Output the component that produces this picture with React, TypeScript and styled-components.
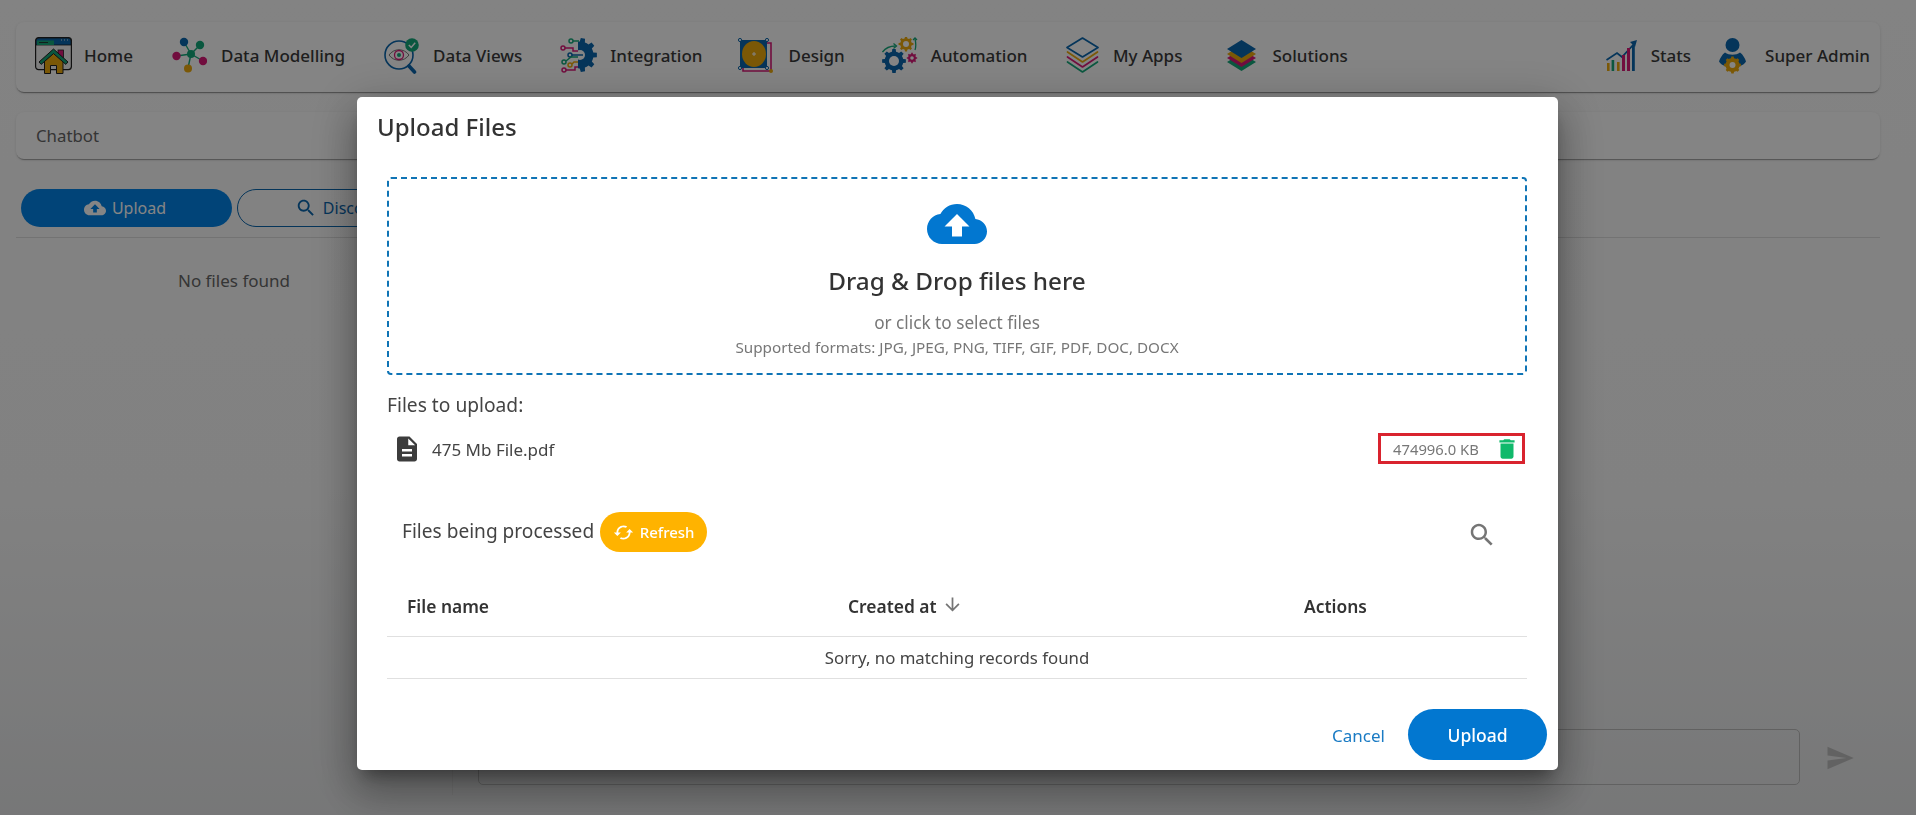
import React from 'react'
import styled, { createGlobalStyle } from 'styled-components'

const GlobalStyle = createGlobalStyle`
  html, body {
    margin: 0;
    height: 100%;
    overflow: hidden;
    font-family: 'Noto Sans', 'Liberation Sans', sans-serif;
    color: #333;
  }
`

const BLUE = '#0a66ad'
const GOLD = '#eba90c'
const PINK = '#d91a78'
const GREEN = '#14a87a'

/* page behind the dialog */

const Page = styled.div`
  box-sizing: border-box;
  height: 815px;
  padding: 22px 36px 0 16px;
  background: linear-gradient(180deg, #fbfbfb 0%, #f8f8f8 60%, #e4e5e6 100%);
`

const NavBar = styled.nav`
  display: flex;
  align-items: center;
  box-sizing: border-box;
  height: 70px;
  padding: 0 10px 4px 19px;
  background: #fdfdfd;
  border-radius: 8px;
  box-shadow: 0 2px 1px -1px rgba(0, 0, 0, 0.35), 0 1px 3px rgba(0, 0, 0, 0.14);
`

const NavItem = styled.a<{ $left: number; $gap: number }>`
  display: flex;
  align-items: center;
  gap: ${props => props.$gap}px;
  margin-left: ${props => props.$left}px;
  font-size: 17px;
  font-weight: 500;
  color: #3a3a3a;
  white-space: nowrap;
`

const NavSpacer = styled.div`
  flex: 1;
`

const Crumbs = styled.div`
  display: flex;
  align-items: center;
  height: 47px;
  margin-top: 20px;
  padding-left: 20px;
  background: #fdfdfd;
  border-radius: 8px;
  box-shadow: 0 2px 1px -1px rgba(0, 0, 0, 0.3), 0 1px 3px rgba(0, 0, 0, 0.12);
  font-size: 16.8px;
  color: #666;
`

const Toolbar = styled.div`
  display: flex;
  align-items: flex-start;
  gap: 5px;
  height: 48px;
  margin-top: 30px;
  padding-left: 5px;
  border-bottom: 1px solid #dcdcdc;
`

const ToolButton = styled.button<{ $filled?: boolean }>`
  display: flex;
  align-items: center;
  justify-content: center;
  gap: 6px;
  box-sizing: border-box;
  width: 211px;
  height: 38px;
  padding-right: 9px;
  border-radius: 19px;
  border: 1px solid ${props => (props.$filled ? 'transparent' : '#0a66ad')};
  background: ${props => (props.$filled ? '#0283e6' : 'transparent')};
  color: ${props => (props.$filled ? '#fff' : '#0a66ad')};
  font: 400 16px 'Noto Sans', sans-serif;
`

const Workspace = styled.div`
  display: flex;
  height: 557px;
`

const FileColumn = styled.div`
  box-sizing: border-box;
  width: 437px;
  padding-top: 31px;
  border-right: 1px solid #dcdcdc;
  text-align: center;
  font-size: 17px;
  color: #666;
`

const ChatColumn = styled.div`
  flex: 1;
  display: flex;
  align-items: flex-end;
  gap: 25px;
  padding: 0 25px 10px 25px;
`

const ChatInput = styled.div`
  flex: 1;
  height: 54px;
  border: 1px solid #bbb;
  border-radius: 5px;
`

const SendSlot = styled.div`
  display: flex;
  height: 54px;
  align-items: center;
  color: #bdbdbd;
`

/* dialog */

const Backdrop = styled.div`
  position: fixed;
  inset: 0;
  display: flex;
  justify-content: center;
  align-items: flex-start;
  padding: 97px 1px 0 0;
  background: rgba(0, 0, 0, 0.48);
`

const Dialog = styled.div`
  box-sizing: border-box;
  width: 1201px;
  height: 673px;
  background: #fff;
  border-radius: 5px;
  box-shadow: 0 11px 15px -7px rgba(0, 0, 0, 0.35), 0 24px 38px 3px rgba(0, 0, 0, 0.22), 0 9px 46px 8px rgba(0, 0, 0, 0.18);
`

const DialogTitle = styled.h2`
  margin: 0;
  padding: 15px 20px 0;
  font-size: 24px;
  line-height: 30px;
  font-weight: 500;
  color: #333;
`

const DialogBody = styled.div`
  padding: 35px 31px 0 30px;
`

const DropZone = styled.div`
  box-sizing: border-box;
  height: 198px;
  padding-top: 15px;
  border: 2px dashed #0f74b5;
  border-radius: 4px;
  display: flex;
  flex-direction: column;
  align-items: center;
`

const DropHeading = styled.div`
  margin-top: 9px;
  font-size: 24.3px;
  line-height: 36px;
  font-weight: 500;
  color: #333;
`

const DropHint = styled.div`
  margin-top: 12px;
  font-size: 17.2px;
  line-height: 24px;
  color: #777;
`

const DropFormats = styled.div`
  margin-top: 2px;
  font-size: 15.25px;
  line-height: 20px;
  color: #777;
`

const SectionLabel = styled.div`
  margin-top: 17px;
  font-size: 19.2px;
  line-height: 26px;
  color: #444;
`

const FileRow = styled.div`
  display: flex;
  align-items: center;
  justify-content: space-between;
  height: 31px;
  margin-top: 15px;
  padding: 0 2px 0 5px;
`

const FileName = styled.div`
  display: flex;
  align-items: center;
  gap: 10px;
  font-size: 17px;
  color: #444;
`

const FileLabel = styled.span`
  margin-top: 2px;
`

const SizeBox = styled.div`
  box-sizing: border-box;
  display: flex;
  align-items: center;
  justify-content: space-between;
  width: 147px;
  height: 31px;
  padding: 0 2px 0 12px;
  border: 3px solid #d9232e;
  font-size: 14.8px;
  color: #777;
`

const ProcessingRow = styled.div`
  display: flex;
  align-items: center;
  height: 40px;
  margin-top: 48px;
  padding: 0 30px 0 15px;
`

const ProcessingTitle = styled.div`
  margin-top: -3px;
  font-size: 19.1px;
  color: #444;
`

const RefreshButton = styled.button`
  display: flex;
  align-items: center;
  justify-content: center;
  gap: 6px;
  box-sizing: border-box;
  width: 107px;
  height: 40px;
  margin-left: 6px;
  border: 0;
  border-radius: 20px;
  background: #ffb300;
  color: #fff;
  font: 500 15px 'Noto Sans', sans-serif;
`

const SearchSlot = styled.div`
  display: flex;
  margin: 6px 0 0 auto;
  color: #757575;
`

const GridRow = styled.div<{ $height: number }>`
  display: grid;
  grid-template-columns: 461px 456px 1fr;
  align-items: center;
  height: ${props => props.$height}px;
  border-bottom: 1px solid #e0e0e0;
`

const HeadCell = styled.div`
  display: flex;
  align-items: center;
  gap: 5px;
  margin-top: -8px;
  font-size: 17.4px;
  font-weight: 600;
  color: #333;

  &:first-child {
    padding-left: 20px;
  }

  svg {
    margin-top: -3px;
  }
`

const EmptyCell = styled.div`
  grid-column: 1 / -1;
  text-align: center;
  font-size: 16.8px;
  color: #444;
`

const TableHead = styled(GridRow)`
  margin-top: 31px;
`

const DialogFooter = styled.div`
  display: flex;
  justify-content: flex-end;
  align-items: center;
  gap: 23px;
  margin: 30px -20px 0 0;
`

const CancelLink = styled.a`
  margin-top: 2px;
  font-size: 17px;
  color: #1a7bc4;
`

const PrimaryButton = styled.button`
  width: 139px;
  height: 51px;
  border: 0;
  border-radius: 26px;
  background: #0277d0;
  color: #fff;
  font: 500 17.5px 'Noto Sans', sans-serif;
`

/* material glyphs */

const Glyph = ({ d, size, color = 'currentColor' }: { d: string; size: number; color?: string }) => (
  <svg width={size} height={size} viewBox="0 0 24 24" fill={color} style={{ flex: 'none' }}>
    <path d={d} />
  </svg>
)

const CLOUD = 'M19.35 10.04C18.67 6.59 15.64 4 12 4 9.11 4 6.6 5.64 5.35 8.04 2.34 8.36 0 10.91 0 14c0 3.31 2.69 6 6 6h13c2.76 0 5-2.24 5-5 0-2.64-2.05-4.78-4.65-4.96zM14 13v4h-4v-4H7l5-5 5 5h-3z'
const SEARCH = 'M15.5 14h-.79l-.28-.27C15.41 12.59 16 11.11 16 9.5 16 5.91 13.09 3 9.5 3S3 5.91 3 9.5 5.91 16 9.5 16c1.61 0 3.09-.59 4.23-1.57l.27.28v.79l5 4.99L20.49 19l-4.99-5zm-6 0C7.01 14 5 11.99 5 9.5S7.01 5 9.5 5 14 7.01 14 9.5 11.99 14 9.5 14z'
const SEND = 'M2.01 21L23 12 2.01 3 2 10l15 2-15 2z'
const FILE = 'M14 2H6c-1.1 0-1.99.9-1.99 2L4 20c0 1.1.89 2 1.99 2H18c1.1 0 2-.9 2-2V8l-6-6zm2 16H8v-2h8v2zm0-4H8v-2h8v2zm-3-5V3.5L18.5 9H13z'
const TRASH = 'M6 19c0 1.1.9 2 2 2h8c1.1 0 2-.9 2-2V7H6v12zM19 4h-3.5l-1-1h-5l-1 1H5v2h14V4z'
const CACHED = 'M19 8l-4 4h3c0 3.31-2.69 6-6 6-1.01 0-1.97-.25-2.8-.7l-1.46 1.46C8.97 19.54 10.43 20 12 20c4.42 0 8-3.58 8-8h3l-4-4zM6 12c0-3.31 2.69-6 6-6 1.01 0 1.97.25 2.8.7l1.46-1.46C15.03 4.46 13.57 4 12 4c-4.42 0-8 3.58-8 8H1l4 4 4-4H6z'
const ARROW = 'M20 12l-1.41-1.41L13 16.17V4h-2v12.17l-5.58-5.59L4 12l8 8 8-8z'

/* nav artwork */

const gearPath = (cx: number, cy: number, outer: number, inner: number, teeth: number) => {
  const step = (Math.PI * 2) / teeth
  const pts: string[] = []
  for (let i = 0; i < teeth; i++) {
    const a = i * step
    const corners: [number, number][] = [
      [inner, a - step * 0.5],
      [inner, a - step * 0.28],
      [outer, a - step * 0.18],
      [outer, a + step * 0.18],
      [inner, a + step * 0.28],
    ]
    corners.forEach(([r, t]) => pts.push(`${(cx + r * Math.cos(t)).toFixed(2)} ${(cy + r * Math.sin(t)).toFixed(2)}`))
  }
  return `M${pts.join('L')}Z`
}

const Gear = ({ cx, cy, outer, inner, hole, color, teeth = 8 }: { cx: number; cy: number; outer: number; inner: number; hole: number; color: string; teeth?: number }) => (
  <>
    <path d={gearPath(cx, cy, outer, inner, teeth)} fill={color} />
    <circle cx={cx} cy={cy} r={hole} fill="#fff" />
  </>
)

const Art = ({ w = 37, h = 37, children }: { w?: number; h?: number; children: React.ReactNode }) => (
  <svg width={w} height={h} viewBox={`0 0 ${w} ${h}`} fill="none" style={{ flex: 'none' }}>
    {children}
  </svg>
)

const HomeArt = () => (
  <Art>
    <rect x="0.6" y="0.6" width="35.8" height="32" rx="3" fill="#f2f2f2" stroke="#222" strokeWidth="1.2" />
    <path d="M1 4a3 3 0 0 1 3-3h29a3 3 0 0 1 3 3v4H1z" fill={BLUE} stroke="#222" strokeWidth="0.8" />
    <rect x="2" y="3.5" width="17" height="4.5" fill={GREEN} />
    <path d="M4 5.5h9" stroke="#222" strokeWidth="0.8" />
    <path d="M26 3h1M29 3h1M32 3h1" stroke="#ddd" strokeWidth="1.2" />
    <rect x="23" y="13" width="5.5" height="8" fill={PINK} stroke="#222" strokeWidth="0.8" />
    <path d="M9.5 24l9-8 9.5 8v12.5h-6.5v-8h-6v8H9.5z" fill={GOLD} stroke="#222" strokeWidth="1" />
    <path d="M18.5 12L33 25l-2.2 2.4L18.5 16.6 6.2 27.4 4 25z" fill={GREEN} stroke="#222" strokeWidth="1" />
  </Art>
)

const ModelArt = () => (
  <Art w={35}>
    <g stroke={GREEN} strokeWidth="1.4">
      <path d="M19 17L12 5" />
      <path d="M19 17L28 8" />
      <path d="M19 17L4.5 19" />
      <path d="M19 17L31 24" />
      <path d="M19 17L16 31" />
    </g>
    <circle cx="12" cy="5" r="4.2" fill={BLUE} />
    <circle cx="28" cy="8" r="4.2" fill={GREEN} />
    <circle cx="4.5" cy="19" r="4.2" fill={PINK} />
    <circle cx="31" cy="24" r="4.2" fill={PINK} />
    <circle cx="16" cy="31.5" r="4" fill={GOLD} />
    <circle cx="19" cy="17" r="4" fill={GREEN} />
  </Art>
)

const ViewsArt = () => (
  <Art w={36}>
    <circle cx="16" cy="18" r="14" fill="#fff" stroke={BLUE} strokeWidth="1.6" />
    <path d="M26 29l5.5 6" stroke={BLUE} strokeWidth="3.6" strokeLinecap="round" />
    <path d="M6 18c5-7 15-7 20 0-5 7-15 7-20 0z" stroke="#777" strokeWidth="1" />
    <circle cx="16" cy="18" r="4.5" stroke={PINK} strokeWidth="1.3" />
    <circle cx="16" cy="18" r="2" fill={GREEN} />
    <circle cx="29" cy="8" r="6.8" fill={GREEN} />
    <path d="M25.8 8l2.4 2.4 4-4.6" stroke="#fff" strokeWidth="1.5" />
  </Art>
)

const IntegrationArt = () => (
  <Art>
    <clipPath id="half-gear">
      <rect x="18" y="0" width="19" height="37" />
    </clipPath>
    <path d={gearPath(20, 18, 17, 13.5, 9)} fill={BLUE} clipPath="url(#half-gear)" />
    <circle cx="20" cy="18" r="5" fill="#fff" />
    <g strokeWidth="1.5" fill="none">
      <path d="M13 4h6" stroke={GREEN} />
      <circle cx="11" cy="4" r="2" stroke={GREEN} />
      <path d="M5 11h8v3h5" stroke={PINK} />
      <circle cx="3" cy="11" r="2" stroke={PINK} />
      <path d="M12 18h11" stroke={BLUE} />
      <circle cx="10" cy="18" r="2" stroke={BLUE} />
      <path d="M6 24l5-4h7" stroke={GREEN} />
      <circle cx="4" cy="25" r="2" stroke={GREEN} />
      <path d="M12 27l2-2h4" stroke={GOLD} />
      <circle cx="10" cy="28" r="2" stroke={GOLD} />
      <path d="M6 33h9v-3h3" stroke={PINK} />
      <circle cx="4" cy="33" r="2" stroke={PINK} />
    </g>
  </Art>
)

const DesignArt = () => (
  <Art>
    <path d="M5 31V34H33V6H29" stroke={PINK} strokeWidth="1.6" />
    <rect x="2" y="3" width="27" height="28" fill={BLUE} />
    <ellipse cx="16" cy="17" rx="12" ry="13" fill={GOLD} />
    <path d="M16 15v4M14 17h4" stroke="#fff" strokeWidth="1" />
    <g fill="#fff" stroke={BLUE} strokeWidth="1">
      <circle cx="2" cy="3" r="1.6" />
      <circle cx="29" cy="3" r="1.6" />
      <circle cx="2" cy="31" r="1.6" />
      <circle cx="29" cy="31" r="1.6" />
    </g>
    <circle cx="33" cy="34" r="2" fill={GOLD} />
  </Art>
)

const AutomationArt = () => (
  <Art w={36}>
    <Gear cx={12} cy={24} outer={12} inner={9.4} hole={5} color={BLUE} />
    <Gear cx={24} cy={7} outer={7.5} inner={5.8} hole={3} color={GOLD} />
    <Gear cx={30} cy={21} outer={5.2} inner={4} hole={1.8} color={PINK} />
    <path d="M0.5 15c3-4 8-6 13-6" stroke={GREEN} strokeWidth="1.3" />
    <path d="M11.5 6.5l3 2.5-3 2.5" stroke={GREEN} strokeWidth="1.3" />
    <path d="M33 13c1-3 1-7 0-11" stroke={GREEN} strokeWidth="1.3" />
    <path d="M31 3l2-2 2 2" stroke={GREEN} strokeWidth="1.3" />
  </Art>
)

const AppsArt = () => (
  <Art w={33}>
    <g strokeWidth="1.7" strokeLinejoin="round" strokeLinecap="round">
      <path d="M1.5 25L16.5 35l15-10" stroke={GREEN} />
      <path d="M1.5 20L16.5 30l15-10" stroke={PINK} />
      <path d="M1.5 15L16.5 25l15-10" stroke={GOLD} />
      <path d="M16.5 1L32 10.5 16.5 20 1 10.5z" fill="#fff" stroke={BLUE} />
    </g>
  </Art>
)

const SolutionsArt = () => (
  <Art w={31}>
    <path d="M15.5 16L30 25 15.5 34 1 25z" fill={GREEN} />
    <path d="M15.5 12L30 21 15.5 30 1 21z" fill={PINK} />
    <path d="M15.5 8L30 17 15.5 26 1 17z" fill={GOLD} />
    <path d="M15.5 3L30 12 15.5 21 1 12z" fill={BLUE} />
  </Art>
)

const StatsArt = () => (
  <Art w={32}>
    <path d="M0.5 23L11 16l5 4L28 7" stroke={BLUE} strokeWidth="1.8" />
    <path d="M24 5l7-2-2 7z" fill={BLUE} />
    <rect x="1" y="26" width="2.6" height="8" fill={GOLD} />
    <rect x="5.6" y="23" width="2.6" height="11" fill={GREEN} />
    <rect x="11" y="25" width="2.6" height="9" fill={GOLD} />
    <rect x="16" y="18" width="3" height="16" fill={PINK} />
    <rect x="21" y="11" width="3" height="23" fill={PINK} />
    <rect x="26" y="8" width="2.8" height="26" fill={BLUE} />
  </Art>
)

const AdminArt = () => (
  <Art w={28}>
    <circle cx="13.5" cy="8" r="7" fill={BLUE} />
    <path d="M6 15.5c4 3 11 3 15 0 3 2 5 6 6 9-1 2-4 4-7 5H7c-3-1-6-3-7-5 1-3 3-7 6-9z" fill={BLUE} />
    <Gear cx={13.5} cy={28} outer={8.5} inner={7} hole={3} color={GOLD} />
  </Art>
)

const navLeft = [
  { label: 'Home', art: <HomeArt />, left: 0, gap: 12 },
  { label: 'Data Modelling', art: <ModelArt />, left: 39, gap: 14 },
  { label: 'Data Views', art: <ViewsArt />, left: 38, gap: 14 },
  { label: 'Integration', art: <IntegrationArt />, left: 38, gap: 13 },
  { label: 'Design', art: <DesignArt />, left: 35, gap: 14 },
  { label: 'Automation', art: <AutomationArt />, left: 37, gap: 13 },
  { label: 'My Apps', art: <AppsArt />, left: 38.5, gap: 14 },
  { label: 'Solutions', art: <SolutionsArt />, left: 44, gap: 15 },
]

export default function App() {
  return (
    <>
      <GlobalStyle />
      <Page>
        <NavBar>
          {navLeft.map(item => (
            <NavItem key={item.label} $left={item.left} $gap={item.gap}>
              {item.art}
              {item.label}
            </NavItem>
          ))}
          <NavSpacer />
          <NavItem $left={0} $gap={13}><StatsArt />Stats</NavItem>
          <NavItem $left={28} $gap={18}><AdminArt />Super Admin</NavItem>
        </NavBar>
        <Crumbs>Chatbot</Crumbs>
        <Toolbar>
          <ToolButton $filled><Glyph d={CLOUD} size={22} />Upload</ToolButton>
          <ToolButton><Glyph d={SEARCH} size={22} />Discover</ToolButton>
        </Toolbar>
        <Workspace>
          <FileColumn>No files found</FileColumn>
          <ChatColumn>
            <ChatInput />
            <SendSlot><Glyph d={SEND} size={30} /></SendSlot>
          </ChatColumn>
        </Workspace>
      </Page>
      <Backdrop>
        <Dialog>
          <DialogTitle>Upload Files</DialogTitle>
          <DialogBody>
            <DropZone>
              <Glyph d={CLOUD} size={60} color="#0277d0" />
              <DropHeading>Drag &amp; Drop files here</DropHeading>
              <DropHint>or click to select files</DropHint>
              <DropFormats>Supported formats: JPG, JPEG, PNG, TIFF, GIF, PDF, DOC, DOCX</DropFormats>
            </DropZone>
            <SectionLabel>Files to upload:</SectionLabel>
            <FileRow>
              <FileName><Glyph d={FILE} size={30} color="#3c3c3c" /><FileLabel>475 Mb File.pdf</FileLabel></FileName>
              <SizeBox>474996.0 KB<Glyph d={TRASH} size={26} color="#10b96b" /></SizeBox>
            </FileRow>
            <ProcessingRow>
              <ProcessingTitle>Files being processed</ProcessingTitle>
              <RefreshButton><Glyph d={CACHED} size={21} />Refresh</RefreshButton>
              <SearchSlot><Glyph d={SEARCH} size={30} /></SearchSlot>
            </ProcessingRow>
            <TableHead $height={53}>
              <HeadCell>File name</HeadCell>
              <HeadCell>Created at<Glyph d={ARROW} size={21} color="#757575" /></HeadCell>
              <HeadCell>Actions</HeadCell>
            </TableHead>
            <GridRow $height={41}>
              <EmptyCell>Sorry, no matching records found</EmptyCell>
            </GridRow>
            <DialogFooter>
              <CancelLink>Cancel</CancelLink>
              <PrimaryButton>Upload</PrimaryButton>
            </DialogFooter>
          </DialogBody>
        </Dialog>
      </Backdrop>
    </>
  )
}
